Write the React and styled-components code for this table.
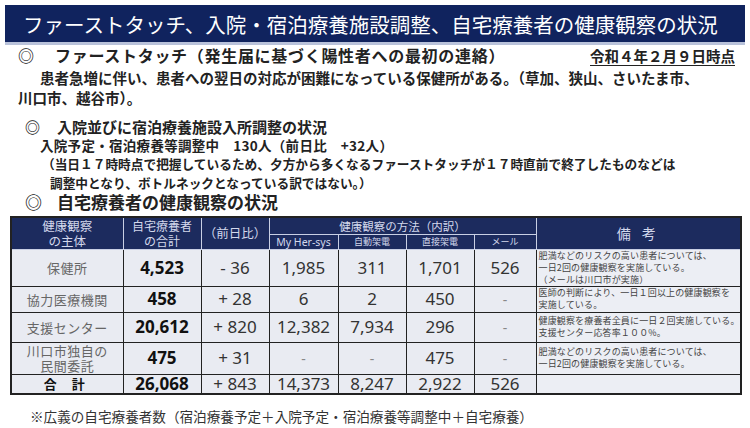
import React from "react";
import styled, { createGlobalStyle } from "styled-components";

const GlobalStyle = createGlobalStyle`
  body {
    margin: 0;
    background: #fff;
    font-family: "Noto Sans CJK JP", "Noto Sans", sans-serif;
  }
`;

const Page = styled.div`
  width: 750px;
  height: 428px;
  overflow: hidden;
  color: #222;
`;

const TitleBar = styled.div`
  margin: 5px 5px 0;
  height: 37px;
  background: #10235e;
  border-bottom: 3px solid #b9c2da;
  display: flex;
  align-items: center;
  padding-left: 18px;
  color: #fff;
  font-size: 20.5px;
  white-space: nowrap;
`;

const SectionRow = styled.div`
  display: flex;
  justify-content: space-between;
  align-items: center;
  height: 20px;
  padding: 0 15px 0 18px;
  white-space: nowrap;
`;

const Heading = styled.div`
  font-size: ${(p) => p.size}px;
  font-weight: 700;
  letter-spacing: ${(p) => p.spacing || 0}px;
  line-height: ${(p) => p.lh}px;
  padding-left: ${(p) => p.indent || 0}px;
  margin-top: ${(p) => p.top || 0}px;
  white-space: nowrap;
`;

const Mark = styled.span`
  display: inline-block;
  width: ${(p) => p.w}px;
`;

const DateStamp = styled.span`
  font-size: 14.5px;
  font-weight: 700;
  text-decoration: underline;
  text-underline-offset: 3px;
`;

const Lead = styled.div`
  margin-top: 3px;
  padding-left: 18px;
  font-size: 14.5px;
  font-weight: 700;
  line-height: 20px;
  white-space: nowrap;
`;

const LeadLine = styled.div`
  padding-left: ${(p) => p.indent || 0}px;
`;

const Detail = styled.div`
  padding-left: 40px;
  font-size: 13.5px;
  letter-spacing: 0.3px;
  font-weight: 700;
  line-height: 18px;
  white-space: nowrap;
`;

const NoteLine = styled.div`
  padding-left: ${(p) => p.indent}px;
  font-size: 12.7px;
  font-weight: 700;
  line-height: 19px;
  white-space: nowrap;
`;

const Table = styled.table`
  margin: 4px 0 0 10px;
  width: 730px;
  border-collapse: collapse;
  table-layout: fixed;
  border: 2px solid #222;
`;

const HeadCell = styled.th`
  background: #1c2b5e;
  color: #d3d8ec;
  font-weight: 400;
  border: 1px solid #c8cfe4;
  font-size: ${(p) => p.size || 12}px;
  letter-spacing: ${(p) => p.spacing || 0}px;
  line-height: ${(p) => p.lh || 14}px;
  padding: 0;
  text-align: center;
  white-space: nowrap;
  font-family: ${(p) => (p.latin ? '"Noto Sans", sans-serif' : 'inherit')};
`;

const Cell = styled.td`
  background: #e9ebf2;
  border: 1px solid #222;
  text-align: center;
  padding: 0;
  font-family: "Noto Sans", "Noto Sans CJK JP", sans-serif;
  font-size: 17px;
  line-height: 18px;
  font-weight: ${(p) => (p.bold ? 700 : 400)};
  color: ${(p) => (p.bold ? "#111" : "#333")};
`;

const Dash = styled.span`
  font-size: 14px;
  color: #888;
`;

const NameCell = styled.td`
  background: #e9ebf2;
  border: 1px solid #222;
  text-align: center;
  padding: 0;
  font-size: 13px;
  line-height: 15px;
  color: ${(p) => (p.total ? "#111" : "#666")};
  font-weight: ${(p) => (p.total ? 700 : 400)};
  letter-spacing: ${(p) => (p.total ? 6 : 0.5)}px;
`;

const RemarkCell = styled.td`
  background: #eceef4;
  border: 1px solid #222;
  padding: 0 0 0 2px;
  font-size: 9px;
  letter-spacing: 0.15px;
  line-height: 12px;
  color: #444;
  white-space: nowrap;
  overflow: hidden;
  vertical-align: middle;
`;

const Row = styled.tr`
  height: ${(p) => p.h}px;
`;

const Footer = styled.div`
  margin-top: 12px;
  padding-left: 30px;
  font-size: 13.6px;
  line-height: 18px;
  color: #333;
  white-space: nowrap;
`;

const rows = [
  {
    name: ["保健所"],
    total: "4,523",
    diff: "- 36",
    values: ["1,985", "311", "1,701", "526"],
    remarks: ["肥満などのリスクの高い患者については、", "一日2回の健康観察を実施している。", "（メールは川口市が実施）"],
    h: 36,
  },
  {
    name: ["協力医療機関"],
    total: "458",
    diff: "+ 28",
    values: ["6", "2", "450", "-"],
    remarks: ["医師の判断により、一日１回以上の健康観察を", "実施している。"],
    h: 26,
  },
  {
    name: ["支援センター"],
    total: "20,612",
    diff: "+ 820",
    values: ["12,382", "7,934", "296", "-"],
    remarks: ["健康観察を療養者全員に一日２回実施している。", "支援センター応答率１００%。"],
    h: 30,
  },
  {
    name: ["川口市独自の", "民間委託"],
    total: "475",
    diff: "+ 31",
    values: ["-", "-", "475", "-"],
    remarks: ["肥満などのリスクの高い患者については、", "一日2回の健康観察を実施している。"],
    h: 32,
  },
];

const widths = [112, 78, 68, 69, 68, 68, 62, 205];

export default function App() {
  return (
    <Page>
      <GlobalStyle />
      <TitleBar>ファーストタッチ、入院・宿泊療養施設調整、自宅療養者の健康観察の状況</TitleBar>

      <SectionRow>
        <Heading size={16} spacing={0.7} lh={20}>
          <Mark w={37}>◎</Mark>ファーストタッチ（発生届に基づく陽性者への最初の連絡）
        </Heading>
        <DateStamp>令和４年２月９日時点</DateStamp>
      </SectionRow>

      <Lead>
        <LeadLine indent={22}>患者急増に伴い、患者への翌日の対応が困難になっている保健所がある。（草加、狭山、さいたま市、</LeadLine>
        <LeadLine>川口市、越谷市）。</LeadLine>
      </Lead>

      <Heading size={15} lh={18} indent={25} top={10}>
        <Mark w={32}>◎</Mark>入院並びに宿泊療養施設入所調整の状況
      </Heading>
      <Detail>入院予定・宿泊療養等調整中　130人（前日比　+32人）</Detail>
      <NoteLine indent={42}>（当日１７時時点で把握しているため、夕方から多くなるファーストタッチが１７時直前で終了したものなどは</NoteLine>
      <NoteLine indent={50}>調整中となり、ボトルネックとなっている訳ではない。）</NoteLine>

      <Heading size={17} lh={20} indent={25}>
        <Mark w={32}>◎</Mark>自宅療養者の健康観察の状況
      </Heading>

      <Table>
        <colgroup>
          {widths.map((w, i) => (
            <col key={i} style={{ width: w }} />
          ))}
        </colgroup>
        <thead>
          <Row h={17}>
            <HeadCell rowSpan={2} size={12.5} lh={15}>
              健康観察<br />の主体
            </HeadCell>
            <HeadCell rowSpan={2} size={12} lh={15}>
              自宅療養者<br />の合計
            </HeadCell>
            <HeadCell rowSpan={2} size={12.5}>（前日比）</HeadCell>
            <HeadCell colSpan={4} size={11.5}>健康観察の方法（内訳）</HeadCell>
            <HeadCell rowSpan={2} size={14} spacing={4}>備 考</HeadCell>
          </Row>
          <Row h={15}>
            <HeadCell size={10.5} latin>My Her-sys</HeadCell>
            <HeadCell size={9}>自動架電</HeadCell>
            <HeadCell size={9}>直接架電</HeadCell>
            <HeadCell size={9}>メール</HeadCell>
          </Row>
        </thead>
        <tbody>
          {rows.map((r) => (
            <Row key={r.name.join("")} h={r.h}>
              <NameCell>
                {r.name.map((n, i) => (
                  <div key={i}>{n}</div>
                ))}
              </NameCell>
              <Cell bold>{r.total}</Cell>
              <Cell>{r.diff}</Cell>
              {r.values.map((v, i) => (
                <Cell key={i}>{v === "-" ? <Dash>-</Dash> : v}</Cell>
              ))}
              <RemarkCell>
                {r.remarks.map((t, i) => (
                  <div key={i}>{t}</div>
                ))}
              </RemarkCell>
            </Row>
          ))}
          <Row h={19}>
            <NameCell total>合 計</NameCell>
            <Cell bold>26,068</Cell>
            <Cell>+ 843</Cell>
            <Cell>14,373</Cell>
            <Cell>8,247</Cell>
            <Cell>2,922</Cell>
            <Cell>526</Cell>
            <RemarkCell />
          </Row>
        </tbody>
      </Table>

      <Footer>※広義の自宅療養者数（宿泊療養予定＋入院予定・宿泊療養等調整中＋自宅療養）</Footer>
    </Page>
  );
}
